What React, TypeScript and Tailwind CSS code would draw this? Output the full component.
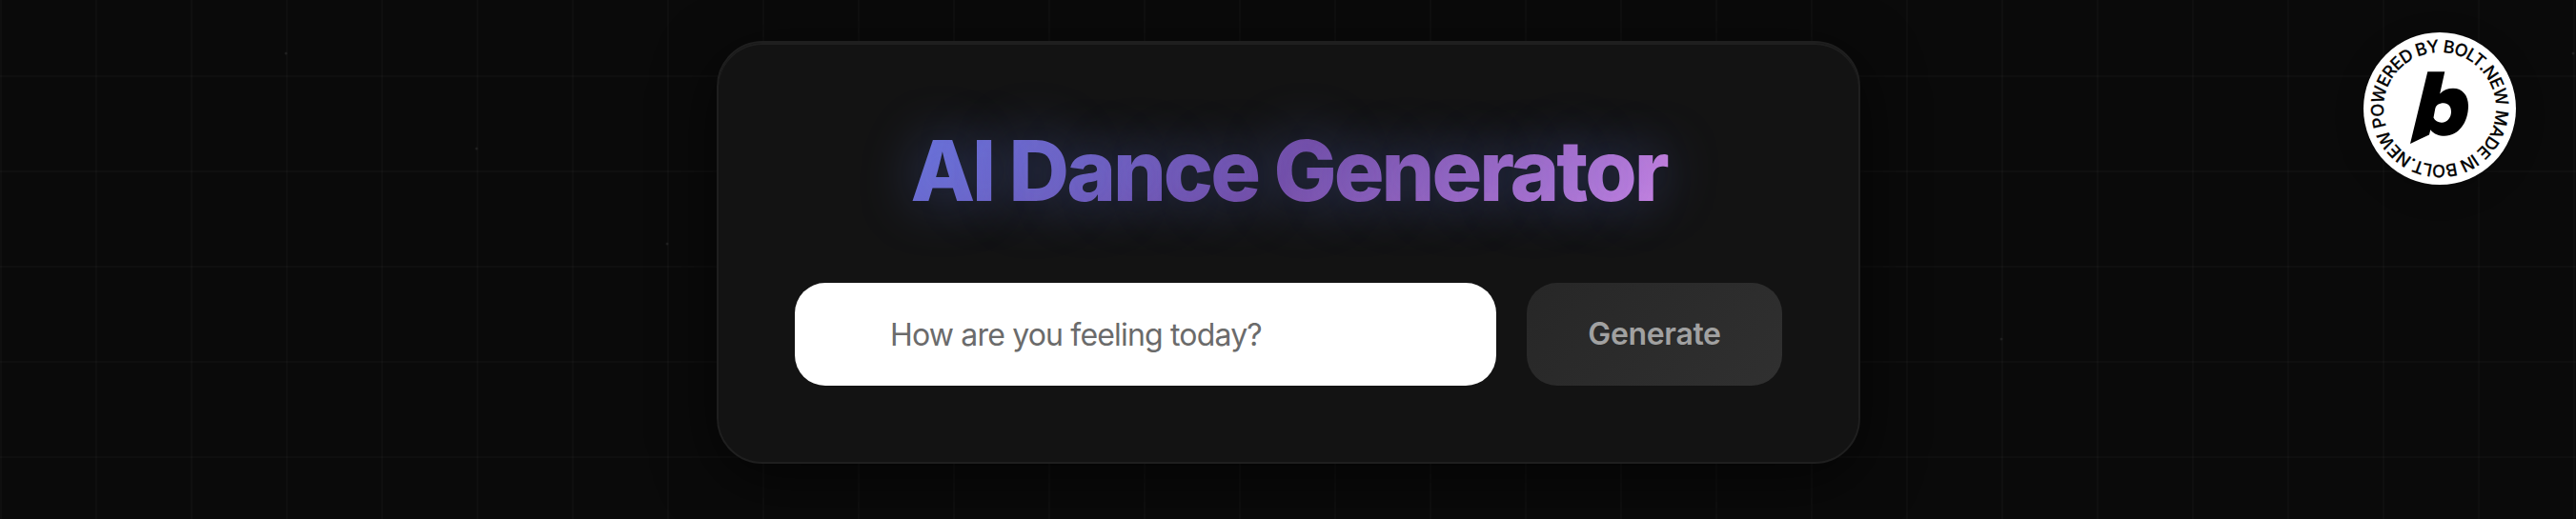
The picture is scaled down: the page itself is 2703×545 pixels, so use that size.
const RING_TEXT = "POWERED BY BOLT.NEW MADE IN BOLT.NEW";

// faint sparkles that sit on the grid lines
const specks = [
  { x: 300, y: 56 },
  { x: 500, y: 156 },
  { x: 700, y: 256 },
  { x: 2100, y: 356 },
  { x: 2700, y: 56 },
];

function Specks() {
  return (
    <svg className="pointer-events-none absolute inset-0 size-full" aria-hidden="true">
      {specks.map((speck) => (
        <circle key={speck.x} cx={speck.x} cy={speck.y} r="1.5" fill="#fff" fillOpacity="0.08" />
      ))}
    </svg>
  );
}

function BoltBadge() {
  return (
    <a
      href="#bolt"
      aria-label="Powered by Bolt.new"
      className="absolute top-[34px] right-[63px] size-[160px] rounded-full shadow-[0_8px_32px_rgba(0,0,0,0.2)]"
    >
      <svg viewBox="0 0 160 160" className="size-full">
        <defs>
          <path
            id="ring"
            d="M23.4 96.8A59 59 0 1 1 136.6 63.2A59 59 0 1 1 23.4 96.8"
          />
        </defs>
        <circle cx="80" cy="80" r="80" fill="#fff" />
        <text
          className="font-['Inter',sans-serif] text-[18px] font-medium"
          fill="#000"
          stroke="#000"
          strokeWidth="0.2"
          transform="rotate(-2 80 80)"
        >
          <textPath href="#ring" textLength="367.5" lengthAdjust="spacing">
            {RING_TEXT}
          </textPath>
        </text>
        <path
          fillRule="evenodd"
          d="M67.3 41.3H85.3L80.2 64.5C84.2 60.5 88.8 58.8 94 58.8C104 58.8 110 66.5 110 77C110 95 99.5 108.7 85 108.7C79.5 108.7 74 107 70.3 102.2L69 107.5L49 117ZM84.2 74.3C79 74.3 76 76.5 75.2 80.5L73.5 89.5C75 92.8 78 94.7 82 94.7C88 94.7 92 89.5 92 83.3C92 78 89 74.3 84.2 74.3Z"
        />
      </svg>
    </a>
  );
}

export default function App() {
  return (
    <main className="relative flex h-[545px] w-full items-start justify-center overflow-hidden bg-[#0a0a0a] bg-[linear-gradient(rgba(255,255,255,0.02)_2px,transparent_2px),linear-gradient(90deg,rgba(255,255,255,0.02)_2px,transparent_2px)] bg-[length:100px_100px] bg-[position:0_79px,0_0] pt-[43px] pl-px font-['Inter',sans-serif]">
      <Specks />

      <section className="flex w-[1200px] flex-col gap-16 rounded-[48px] border-2 border-[#1f1f1f] bg-[#131313] p-20 shadow-[0_16px_64px_rgba(0,0,0,0.6),inset_0_2px_0_#1f1f1f]">
        <h1 className="bg-[linear-gradient(135deg,#667eea_0%,#764ba2_50%,#ec98f8_102%)] bg-clip-text text-center text-[88px] leading-[108px] font-extrabold tracking-[-2.98px] text-transparent [text-shadow:0_0_60px_rgba(102,126,234,0.42)]">
          AI Dance Generator
        </h1>

        <form className="flex gap-8" onSubmit={(e) => e.preventDefault()}>
          <input
            type="text"
            placeholder="How are you feeling today?"
            className="h-[108px] min-w-0 flex-1 rounded-[32px] bg-white px-[100px] text-[32px] tracking-[-0.82px] text-black placeholder:text-[#6b6b6b]"
          />
          <button
            type="submit"
            disabled
            className="h-[108px] w-[268px] rounded-[32px] bg-linear-135 from-[#272727] to-[#303030] text-[32px] font-semibold tracking-[-0.35px] text-[#a1a1a1]"
          >
            Generate
          </button>
        </form>
      </section>

      <BoltBadge />
    </main>
  );
}
